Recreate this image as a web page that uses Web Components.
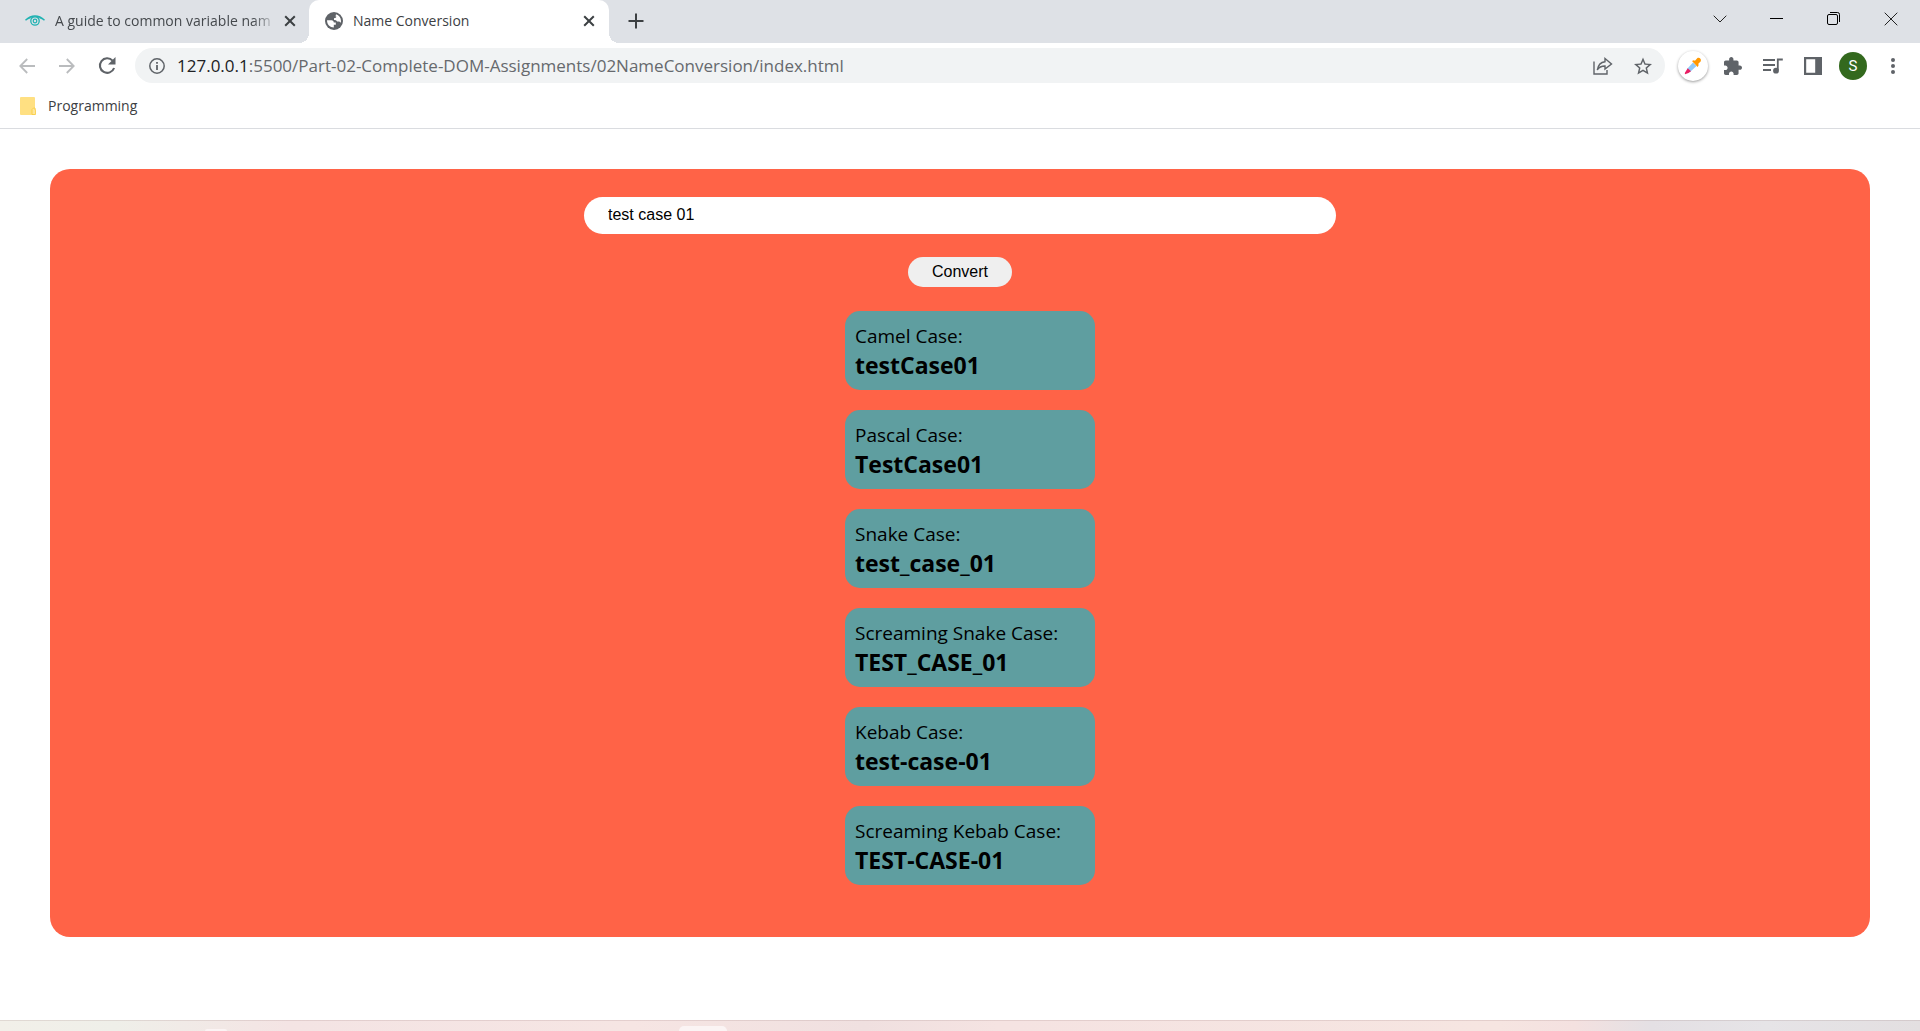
<!DOCTYPE html>
<html lang="en">
<head>
<meta charset="utf-8">
<title>Name Conversion</title>
<style>
  html, body { height: 100%; margin: 0; }
  body { font-family: "Open Sans", "Noto Sans", sans-serif; color: #000; background: #fff; }
</style>
</head>
<body>
<browser-window></browser-window>

<script>
const ICONS = {
  eye: '<svg viewBox="0 0 20 12" width="20" height="12" fill="none" stroke="#1fb2b2"><path d="M.5 5.200C4 2 7 1 10 1s6 1 9.500 4.200" stroke-width="1.500"/><path d="M2.500 4C5.500 3 6 2.500 7 2M17.500 4C14.500 3 14 2.500 13 2" stroke-width="1"/><circle cx="10" cy="6" r="4.200" stroke-width="1.300"/><circle cx="10" cy="6" r="1.800" stroke-width="1.200"/></svg>',
  globe: '<svg viewBox="0 0 18 18" width="18" height="18"><circle cx="9" cy="9" r="9" fill="#5f6368"/><path d="M2 8.300h4.500c1.500.2 2.300 1 2.300 2.200h2v2.300H8.800v2.700C5 15.500 2 12.600 2 8.300zM11 2.300c3 .9 5 3.600 5 6.700 0 .8-.1 1.200-.3 1.800-.6-.9-1.400-1.300-2.400-1.300h-1.200c-.7-1.300-1.700-1.600-3.100-1.600V6.300c1.500 0 2.400-.4 2.300-1.700h-.8z" fill="#fff"/></svg>',
  cross: '<svg viewBox="0 0 12 12" width="12" height="12" stroke="#3c4043" stroke-width="2"><path d="M1.200 1.200l9.600 9.600M10.800 1.200l-9.600 9.600"/></svg>',
  plus: '<svg viewBox="0 0 16 16" width="16" height="16" stroke="#3c4043" stroke-width="2"><path d="M8 .5v15M.5 8h15"/></svg>',
  chevron: '<svg viewBox="0 0 14 8" width="14" height="8" fill="none" stroke="#222"><path d="M.7.7L7 7 13.300.7"/></svg>',
  minimize: '<svg viewBox="0 0 13 13" width="13" height="13" stroke="#000"><path d="M0 6.500h13"/></svg>',
  restore: '<svg viewBox="0 0 13 13" width="13" height="13" fill="none" stroke="#000"><rect x=".5" y="2.500" width="10" height="10" rx="1.500"/><path d="M3 .5h7.500a2 2 0 0 1 2 2V10"/></svg>',
  exit: '<svg viewBox="0 0 14 14" width="14" height="14" stroke="#222"><path d="M.7.7l12.600 12.600M13.300.7L.7 13.300"/></svg>',
  back: '<svg viewBox="0 0 16 16" width="16" height="16" fill="none" stroke="#babcbe" stroke-width="1.800"><path d="M16 8H1.500M8.200 1L1.300 8l6.900 7"/></svg>',
  forward: '<svg viewBox="0 0 16 16" width="16" height="16" fill="none" stroke="#babcbe" stroke-width="1.800"><path d="M0 8h14.500M7.800 1l6.900 7-6.900 7"/></svg>',
  reload: '<svg viewBox="0 0 18 18" width="18" height="18" fill="none"><path d="M14.600 3.600A7.300 7.300 0 1 0 16.100 11" stroke="#5f6368" stroke-width="2.100"/><path d="M17.500 0v7.500H10z" fill="#5f6368"/></svg>',
  info: '<svg viewBox="0 0 16 16" width="16" height="16" fill="none" stroke="#5f6368"><circle cx="8" cy="8" r="7.200" stroke-width="1.500"/><path d="M8 7v5M8 4v1.700" stroke-width="1.800"/></svg>',
  share: '<svg viewBox="0 0 20 18" width="20" height="18" fill="none" stroke="#5f6368" stroke-width="1.400"><path d="M1 4.500V17h13v-4M12 1.500L18.500 7 12 12V9C8.500 9 6 10 4.300 13 5 8.500 7.500 5.200 12 4.700z"/></svg>',
  star: '<svg viewBox="2 2 20 19" width="18" height="18"><path fill="#5f6368" d="M22 9.240l-7.190-.62L12 2 9.190 8.630 2 9.240l5.460 4.730L5.820 21 12 17.270 18.180 21l-1.630-7.030L22 9.240zM12 15.400l-3.760 2.270 1-4.280-3.320-2.880 4.380-.38L12 6.100l1.710 4.040 4.380.38-3.320 2.880 1 4.280L12 15.400z"/></svg>',
  picker: '<svg viewBox="0 0 18 18" width="18" height="18"><path d="M9 5.500l3.500 3.500-6.500 6-3-3z" fill="#90caf9"/><path d="M3.700 11.200l3.300 3L4.500 16 1 17.200.8 16z" fill="#e91e63"/><path d="M8 4l1.700-.7 1.300.4 2.200-2.500C15 0 17.600 1.800 16.800 4.200L14.300 6.800l.3 1.500-1 1.700z" fill="#ff9800"/></svg>',
  puzzle: '<svg viewBox="2 1 21 21" width="18" height="18"><path fill="#5f6368" d="M20.500 11H19V7c0-1.100-.9-2-2-2h-4V3.500C13 2.120 11.880 1 10.500 1S8 2.120 8 3.500V5H4c-1.100 0-1.990.9-1.990 2v3.800H3.500c1.490 0 2.700 1.210 2.700 2.700s-1.210 2.700-2.700 2.700H2V20c0 1.100.9 2 2 2h3.800v-1.500c0-1.490 1.210-2.700 2.700-2.700s2.700 1.210 2.700 2.700V22H17c1.100 0 2-.9 2-2v-4h1.500c1.380 0 2.500-1.120 2.500-2.500S21.880 11 20.500 11z"/></svg>',
  music: '<svg viewBox="0 0 20 16" width="20" height="16" fill="none" stroke="#5f6368" stroke-width="1.800"><path d="M0 2h12M0 7h12M0 12h8M14.800 12V1.500h5"/><circle cx="13" cy="12.700" r="2.900" fill="#5f6368" stroke="none"/></svg>',
  panel: '<svg viewBox="0 0 18 18" width="18" height="18" fill="#5f6368"><path fill-rule="evenodd" d="M0 0h18v18H0zM2.200 2.200v13.600h9V2.200z"/></svg>',
  menu: '<svg viewBox="0 0 4 16" width="4" height="16" fill="#5f6368"><circle cx="2" cy="2" r="2"/><circle cx="2" cy="8" r="2"/><circle cx="2" cy="14" r="2"/></svg>',
  folder: '<svg viewBox="0 0 16 18" width="16" height="18"><path d="M1 0h13a1 1 0 0 1 1 1v10.500l1 1V17a1 1 0 0 1-1 1H1a1 1 0 0 1-1-1V1a1 1 0 0 1 1-1z" fill="#ffe082"/><path d="M12 17.500v-5l1.500-1.500h1.500v1.500l.7.700v3.800l-.7.700z" fill="#ffe69a" stroke="#f9cf4a"/></svg>'
};

function define(name, html, setup) {
  const template = document.createElement('template');
  template.innerHTML = html;
  customElements.define(name, class extends HTMLElement {
    constructor() {
      super();
      this.attachShadow({ mode: 'open' }).append(template.content.cloneNode(true));
    }
    connectedCallback() { if (setup) setup(this, this.shadowRoot); }
  });
}

customElements.define('ui-icon', class extends HTMLElement {
  static observedAttributes = ['name'];
  constructor() {
    super();
    this.attachShadow({ mode: 'open' });
  }
  attributeChangedCallback(attribute, previous, name) {
    this.shadowRoot.innerHTML = '<style>:host{display:flex;flex:none}svg{display:block}</style>' + (ICONS[name] || '');
  }
});

define('icon-button', `
  <style>
    :host { display: flex; flex: none; width: 40px; height: 36px; }
    button { flex: 1; display: flex; align-items: center; justify-content: center; padding: 0; border: 0; background: none; }
    :host([raised]) { align-items: center; justify-content: center; }
    :host([raised]) button { flex: none; width: 30px; height: 30px; border-radius: 50%; background: #fff; box-shadow: 0 1px 3px rgba(0,0,0,.4); }
  </style>
  <button><ui-icon></ui-icon></button>`, (host, root) => {
  root.querySelector('ui-icon').setAttribute('name', host.getAttribute('icon'));
  root.querySelector('button').setAttribute('aria-label', host.getAttribute('label'));
});

define('browser-tab', `
  <style>
    :host { display: flex; align-items: center; box-sizing: border-box; height: 43px; padding: 0 7px 2px 16px; font-size: 14px; color: #45494d; }
    :host([active]) { position: relative; width: 300px; background: #fff; border-radius: 10px 10px 0 0; color: #3c4043; }
    :host([active])::before, :host([active])::after { content: ""; position: absolute; bottom: 0; width: 10px; height: 10px; }
    :host([active])::before { right: 100%; background: radial-gradient(circle at 0 0, #dee1e6 10px, #fff 10px); }
    :host([active])::after { left: 100%; background: radial-gradient(circle at 100% 0, #dee1e6 10px, #fff 10px); }
    .title { flex: 1; min-width: 0; margin-left: 10px; overflow: hidden; white-space: nowrap; line-height: 24px; }
    :host(:not([active])) .title { -webkit-mask-image: linear-gradient(to left, transparent, #000 24px); mask-image: linear-gradient(to left, transparent, #000 24px); }
    icon-button { width: 26px; }
  </style>
  <ui-icon></ui-icon><span class="title"><slot></slot></span><icon-button icon="cross" label="Close tab"></icon-button>`, (host, root) => {
  root.querySelector('ui-icon').setAttribute('name', host.getAttribute('icon'));
});

define('tab-strip', `
  <style>
    :host { display: flex; height: 43px; background: #dee1e6; }
    .idle { width: 309px; padding-left: 25px; padding-right: 6px; }
    .new { width: 54px; height: 42px; }
    .controls { display: flex; margin-left: auto; padding-right: 1px; }
    .controls icon-button { width: 57px; height: 37px; }
  </style>
  <browser-tab class="idle" icon="eye">A guide to common variable nam</browser-tab>
  <browser-tab active icon="globe">Name Conversion</browser-tab>
  <icon-button class="new" icon="plus" label="New tab"></icon-button>
  <div class="controls">
    <icon-button icon="chevron" label="Search tabs"></icon-button>
    <icon-button icon="minimize" label="Minimize"></icon-button>
    <icon-button icon="restore" label="Restore"></icon-button>
    <icon-button icon="exit" label="Close"></icon-button>
  </div>`);

define('address-bar', `
  <style>
    :host { display: flex; align-items: center; flex: 1; min-width: 0; height: 35px; padding: 0 2px 0 14px; box-sizing: border-box; border-radius: 18px; background: #f1f3f4; }
    .url { flex: 1; min-width: 0; margin-left: 12px; overflow: hidden; white-space: nowrap; font-size: 17px; line-height: 28px; color: #66696d; }
    b { font-weight: 400; color: #202124; }
  </style>
  <ui-icon name="info"></ui-icon>
  <span class="url"><b>127.0.0.1</b>:5500/Part-02-Complete-DOM-Assignments/02NameConversion/index.html</span>
  <icon-button icon="share" label="Share"></icon-button>
  <icon-button icon="star" label="Bookmark"></icon-button>`);

define('tool-bar', `
  <style>
    :host { display: flex; align-items: center; height: 45px; padding: 0 7px; }
    address-bar { margin: 0 8px; }
    .avatar { width: 28px; height: 28px; margin: 0 6px; padding: 0; border: 0; border-radius: 50%; background: #33691e; color: #fff; font: 15px/28px Roboto, sans-serif; }
  </style>
  <icon-button icon="back" label="Back"></icon-button>
  <icon-button icon="forward" label="Forward"></icon-button>
  <icon-button icon="reload" label="Reload"></icon-button>
  <address-bar></address-bar>
  <icon-button raised icon="picker" label="Color picker"></icon-button>
  <icon-button icon="puzzle" label="Extensions"></icon-button>
  <icon-button icon="music" label="Media"></icon-button>
  <icon-button icon="panel" label="Side panel"></icon-button>
  <button class="avatar">S</button>
  <icon-button icon="menu" label="Menu"></icon-button>`);

define('bookmarks-bar', `
  <style>
    :host { display: flex; align-items: center; height: 41px; padding: 0 20px; border-bottom: 1px solid #dadce0; box-sizing: border-box; }
    a { display: flex; align-items: center; gap: 12px; padding-bottom: 4px; font-size: 14px; line-height: 24px; color: #3c4043; text-decoration: none; }
  </style>
  <a href="#"><ui-icon name="folder"></ui-icon>Programming</a>`);

define('case-card', `
  <style>
    :host { display: block; box-sizing: border-box; width: 250px; padding: 10px; border-radius: 15px; background: cadetblue; }
    .label { font-size: 19px; line-height: 30px; font-weight: 500; }
    .value { font-size: 23px; line-height: 29px; font-weight: 700; }
  </style>
  <div class="label"><slot name="label"></slot></div>
  <div class="value"><slot></slot></div>`);

define('name-converter', `
  <style>
    :host { display: flex; flex-direction: column; align-items: center; margin: 40px 50px 0; padding: 28px 0 52px; border-radius: 20px; background: tomato; }
    form { display: flex; flex-direction: column; align-items: center; gap: 23px; width: 100%; }
    input, button { box-sizing: border-box; padding: 0 24px; border: 0; border-radius: 20px; font: 16px "Liberation Sans", Arial, sans-serif; color: #000; }
    input { width: calc(40% + 24px); height: 37px; padding-bottom: 2px; background: #fff; }
    button { height: 30px; background: #efefef; }
    .results { display: flex; flex-direction: column; gap: 20px; margin: 24px 0 0 20px; }
  </style>
  <form onsubmit="return false">
    <input type="text" value="test case 01" aria-label="Name to convert">
    <button type="submit">Convert</button>
  </form>
  <div class="results">
    <case-card><span slot="label">Camel Case:</span>testCase01</case-card>
    <case-card><span slot="label">Pascal Case:</span>TestCase01</case-card>
    <case-card><span slot="label">Snake Case:</span>test_case_01</case-card>
    <case-card><span slot="label">Screaming Snake Case:</span>TEST_CASE_01</case-card>
    <case-card><span slot="label">Kebab Case:</span>test-case-01</case-card>
    <case-card><span slot="label">Screaming Kebab Case:</span>TEST-CASE-01</case-card>
  </div>`);

define('task-bar', `
  <style>
    :host { display: flex; align-items: flex-end; height: 11px; overflow: hidden; background: linear-gradient(90deg, #f2f0e9 0, #efefe9 6%, #f4e4e4 15%, #f6e5e3 33%, #f0e0e0 45%, #f5e3e2 52%, #f6e5e1 78%, #f4e1e0 82%, #e4e0e4 86%, #e6e4e7 92%, #e3dfe1 100%); box-shadow: inset 0 1px rgba(120,80,80,.14); }
    i { background: #fbf4f4; border-radius: 5px 5px 0 0; }
    .dot { width: 22px; height: 2px; margin-left: 10.700%; }
    .app { width: 48px; height: 5px; margin-left: 23.500%; }
  </style>
  <i class="dot"></i><i class="app"></i>`);

define('browser-window', `
  <style>
    :host { display: flex; flex-direction: column; min-height: 100%; }
    main { flex: 1; }
  </style>
  <tab-strip></tab-strip>
  <tool-bar></tool-bar>
  <bookmarks-bar></bookmarks-bar>
  <main><name-converter></name-converter></main>
  <task-bar></task-bar>`);
</script>
</body>
</html>
